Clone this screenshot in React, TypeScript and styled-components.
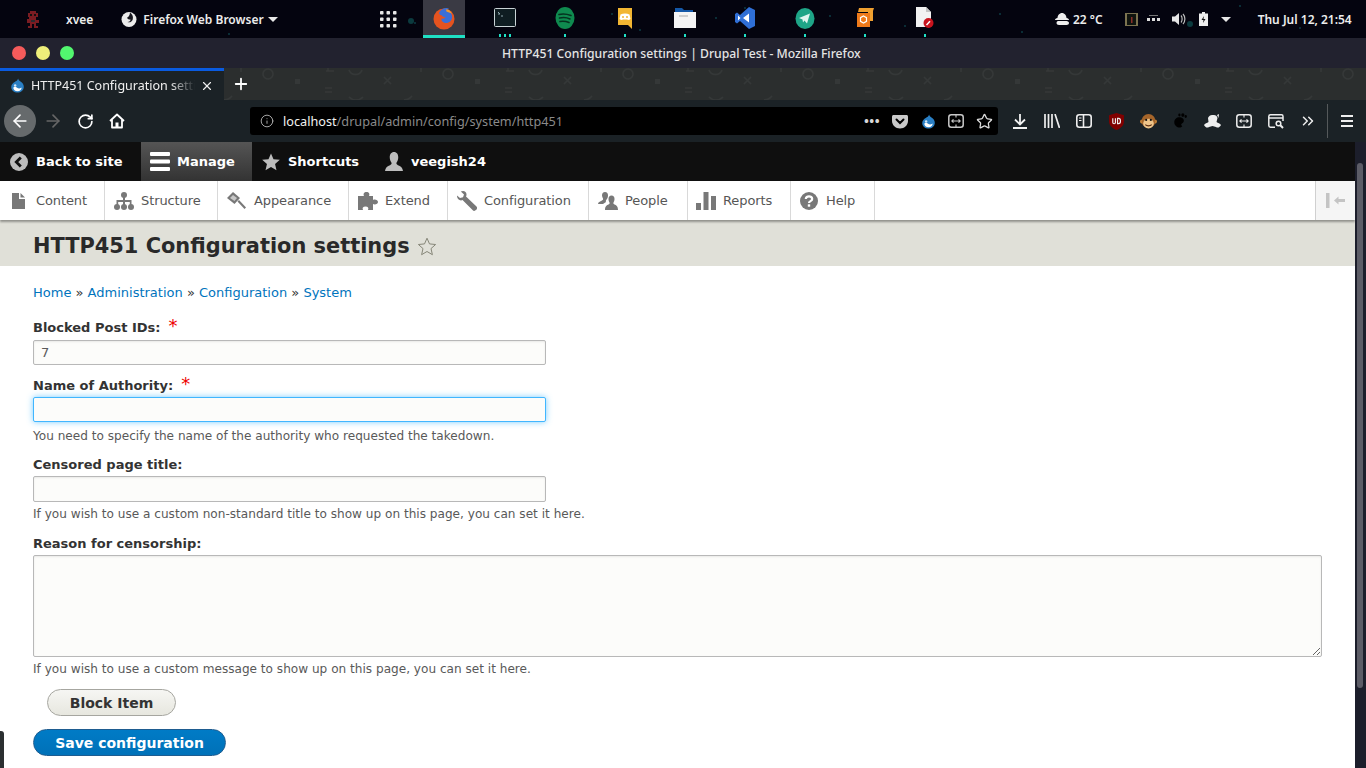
import React from "react";
import styled, { createGlobalStyle } from "styled-components";
import { ArrowLeft, ArrowRight, RotateCw, Info, Star, ChevronsRight, Plus, X } from "lucide-react";

const GlobalStyle = createGlobalStyle`
  html, body {
    margin: 0;
    padding: 0;
    height: 768px;
    overflow: hidden;
    background: #04040f;
  }
  * { box-sizing: border-box; }
`;

const Drupal = ({ size = 16 }: { size?: number }) => (
  <svg width={size} height={size} viewBox="0 0 16 16">
    <path d="M8.6 0.5C9 2.6 11 3.4 12.3 4.6 14 6.100 14.800 8 14.700 9.800 14.500 13.100 11.700 15.500 8 15.500 4.300 15.500 1.300 13 1.300 9.500 1.300 6.800 3.300 5.200 5 4.200 6.500 3.300 8.200 2.600 8.600 0.500Z" fill="#2a7fc4" />
    <path d="M3.500 10.300C4.500 8.900 6.200 9.300 7.600 10.300 9 11.300 10.400 11.500 12.300 10 12.600 12 10.800 14 8 14 5.400 14 3.600 12.400 3.500 10.300Z" fill="#fff" />
    <circle cx="5.500" cy="8" r="1.300" fill="#cfe6f7" />
  </svg>
);

const Firefox = ({ size = 24 }: { size?: number }) => (
  <svg width={size} height={size} viewBox="0 0 24 24">
    <circle cx="12" cy="13" r="10.500" fill="#e5531f" />
    <path d="M7 7C9 2.500 14 1 17 2.500 15.500 3 15 4 15.500 4.500 18 5 20.500 8 20 12 19.500 15.500 16 17.500 13 17 10.500 16.500 9 14.500 9.500 12.500 11 13 13 12.500 13.500 11.500 12 11 10 10.500 10 9.500 8.500 9.500 7.500 8.500 7 7Z" fill="#3a6fd8" />
    <path d="M14 3.500C16.500 3 19 5 20 8 18 6.500 16 6 14.500 5.500Z" fill="#f29a2e" />
  </svg>
);

const FirefoxMono = () => (
  <svg width="16" height="16" viewBox="0 0 16 16">
    <circle cx="8" cy="8.500" r="7.500" fill="#ececec" />
    <path d="M9 1.500C11 3 12.500 5 11.800 8.200 11.200 10.800 8.500 12 6.500 11 8.500 10.800 9.500 9.800 9.500 8.500 8 8.800 6.500 8 6 6.800 7.500 6 8.800 4.500 9 1.500Z" fill="#17171f" />
  </svg>
);

const Deadpool = () => (
  <svg width="14" height="17" viewBox="0 0 14 17">
    <path d="M4 0H10V2H12V6H10V9H13V12H10V15H12V17H8V13H6V17H2V15H4V12H1V8H3V6H2V2H4Z" fill="#7a1c22" />
    <rect x="4" y="3" width="2" height="2" fill="#111" />
    <rect x="8" y="3" width="2" height="2" fill="#111" />
    <rect x="5" y="9" width="4" height="2" fill="#2b2b30" />
  </svg>
);

const Grid = () => (
  <svg width="17" height="17" viewBox="0 0 17 17" fill="#e8e8e8">
    {[0, 6.500, 13].flatMap((y) =>
      [0, 6.500, 13].map((x) => <rect key={`${x}-${y}`} x={x} y={y} width="3.500" height="3.500" rx="0.800" />)
    )}
  </svg>
);

const TermIcon = () => (
  <svg width="22" height="20" viewBox="0 0 22 20">
    <rect x="0.500" y="0.500" width="21" height="18" rx="1" fill="#0f1d22" stroke="#c9d3d6" />
    <path d="M4 4L6 6 4 6M7 8H9" stroke="#8fa6ad" strokeWidth="1" fill="none" />
  </svg>
);

const Spotify = () => (
  <svg width="20" height="24" viewBox="0 0 20 24">
    <ellipse cx="10" cy="12" rx="9.500" ry="11" fill="#0f8a4f" />
    <path d="M4 8.500C8 7.500 12 8 16 9.500M4.500 12C8 11.200 12 11.500 15 13M5 15.500C8 15 11 15.200 14 16.500" stroke="#05321f" strokeWidth="1.600" fill="none" strokeLinecap="round" />
  </svg>
);

const Discord = () => (
  <svg width="16" height="21" viewBox="0 0 16 21">
    <path d="M1 0H15V21L11 17H1Z" fill="#f2b632" />
    <path d="M3.500 6.500C6 5 10 5 12.500 6.500L13.500 11C12 12.500 10.500 12 10 11.500H6C5.500 12 4 12.500 2.500 11Z" fill="#fff" />
    <circle cx="6" cy="9" r="1" fill="#f2b632" />
    <circle cx="10" cy="9" r="1" fill="#f2b632" />
  </svg>
);

const Files = () => (
  <svg width="22" height="22" viewBox="0 0 22 22">
    <path d="M1 1H8L10 3H19V8H1Z" fill="#1458a8" />
    <path d="M0 5H22V21H0Z" fill="#f4f4f4" />
    <rect x="5" y="8" width="9" height="2" fill="#cfcfcf" />
  </svg>
);

const VsCode = () => (
  <svg width="20" height="22" viewBox="0 0 20 22">
    <path d="M14 0L20 3V19L14 22 5 14 2 16.500 0 15V7L2 5.500 5 8Z" fill="#2f6fd6" />
    <path d="M14 6.500V15.500L8 11ZM3 8.500L5.500 11 3 13.500Z" fill="#fff" />
  </svg>
);

const Telegram = () => (
  <svg width="20" height="21" viewBox="0 0 20 21">
    <ellipse cx="10" cy="10.500" rx="9.500" ry="10.500" fill="#1ea587" />
    <path d="M4 10L15 5.500 12 15.500 9.500 12.500 8 14.500 7.500 11.500Z" fill="#dff5ef" />
  </svg>
);

const Sublime = () => (
  <svg width="20" height="20" viewBox="0 0 20 20">
    <path d="M4 0H19L18 3V13H13V4H3Z" fill="#f0a030" />
    <rect x="2" y="5" width="13" height="14" fill="#ef7a1a" />
    <path d="M8.500 8L11.500 9.700V13.300L8.500 15 5.500 13.300V9.700Z" fill="none" stroke="#fff" strokeWidth="1.200" />
  </svg>
);

const DocIcon = () => (
  <svg width="18" height="22" viewBox="0 0 18 22">
    <path d="M0 0H10L15 5V20H0Z" fill="#f2f2f2" />
    <path d="M10 0L15 5H10Z" fill="#c4c4c4" />
    <circle cx="12.500" cy="16" r="5" fill="#c8141e" />
    <path d="M10.500 18L14 14.200" stroke="#fff" strokeWidth="1.500" />
  </svg>
);

const GnomeFoot = () => (
  <svg width="16" height="16" viewBox="0 0 14 14" fill="#000">
    <path d="M2 8C2 5 5 3 8 4 11 5 11 8 9 9 7.500 9.700 8 11 9 11.500 7 14 2 12 2 8Z" />
    <ellipse cx="9.500" cy="1.800" rx="1.400" ry="1.600" />
    <ellipse cx="6.500" cy="1.800" rx="1" ry="1.300" />
    <ellipse cx="12" cy="3" rx="1" ry="1.300" />
  </svg>
);

const Cloud = () => (
  <svg width="14" height="14" viewBox="0 0 14 14" fill="#eee">
    <path d="M2.500 6C2.500 3.500 4.500 1 7 1S11.500 3.500 11.500 6C13 6 14 7 14 8H0C0 7 1 6 2.500 6Z" />
    <path d="M3 9H11.500C13 9 14 10 14 11S13 13 11.500 13H4C2.500 13 1.500 12 1.500 11S2 9 3 9Z" />
  </svg>
);

const Volume = () => (
  <svg width="14" height="14" viewBox="0 0 14 14" fill="#e6e6e6">
    <path d="M0 4.500H3L7 1V13L3 9.500H0Z" />
    <path d="M9 3.500C10.500 5 10.500 9 9 10.500M11 2C13.500 4.500 13.500 9.500 11 12" stroke="#bbb" strokeWidth="1.200" fill="none" />
  </svg>
);

const Battery = () => (
  <svg width="9" height="14" viewBox="0 0 9 14">
    <path d="M3 0H6V1.500H9V14H0V1.500H3Z" fill="#eee" />
    <path d="M5 4L2.500 8H4.500L4 11 6.500 7H4.500Z" fill="#111" />
  </svg>
);

const Pocket = () => (
  <svg width="16" height="15" viewBox="0 0 16 15">
    <path d="M1.500 1H14.500C15.300 1 16 1.700 16 2.500V7C16 11 12.500 14.500 8 14.500S0 11 0 7V2.500C0 1.700 0.700 1 1.500 1Z" fill="#c9c9c9" />
    <path d="M4.500 5.500L8 9 11.500 5.500" stroke="#000" strokeWidth="2" fill="none" strokeLinecap="round" />
  </svg>
);

const FrameArrows = ({ color = "#eee" }: { color?: string }) => (
  <svg width="16" height="14" viewBox="0 0 16 14" fill="none" stroke={color} strokeWidth="1.500">
    <rect x="0.800" y="0.800" width="14.400" height="12.400" rx="2.500" />
    <path d="M8 1V3.500M8 10.500V13M4 7H12M5.500 5.300L3.800 7 5.500 8.700M10.500 5.300L12.200 7 10.500 8.700" strokeWidth="1.100" />
  </svg>
);

const HomeIcon = () => (
  <svg width="16" height="16" viewBox="0 0 16 16" fill="none" stroke="#fff" strokeWidth="1.800">
    <path d="M1 8L8 1.500 15 8M3 6.500V14.500H13V6.500" strokeLinejoin="round" />
    <rect x="6.500" y="9.500" width="3" height="5" fill="#fff" stroke="none" />
  </svg>
);

const DownloadIcon = () => (
  <svg width="14" height="15" viewBox="0 0 14 15" fill="none" stroke="#f2f2f2" strokeWidth="1.800">
    <path d="M7 0V10M2 5.500L7 10.500 12 5.500" />
    <path d="M0 14H14" strokeWidth="2" />
  </svg>
);

const LibraryIcon = () => (
  <svg width="16" height="14" viewBox="0 0 16 14" stroke="#eee" strokeWidth="1.700" fill="none">
    <path d="M1 0V14M4.500 0V14M8 0V14M11 0L15.500 14" />
  </svg>
);

const SidebarIcon = () => (
  <svg width="16" height="14" viewBox="0 0 16 14" fill="none" stroke="#eee" strokeWidth="1.600">
    <rect x="0.800" y="0.800" width="14.400" height="12.400" rx="2.500" />
    <path d="M7.500 1V13" />
    <path d="M3 4H5.500M3 6.500H5.500" strokeWidth="1.100" />
  </svg>
);

const UBlock = () => (
  <svg width="15" height="17" viewBox="0 0 14 16">
    <path d="M7 0L14 2V8C14 12 10.500 14.700 7 16 3.500 14.700 0 12 0 8V2Z" fill="#800000" />
    <path d="M3.500 5V9C3.500 10.500 6 10.500 6 9V5M8 5V10H9C11.300 10 11.300 5 9 5Z" stroke="#eee" strokeWidth="1.100" fill="none" />
  </svg>
);

const Monkey = () => (
  <svg width="17" height="17" viewBox="0 0 16 16">
    <circle cx="2" cy="8" r="2" fill="#c78436" />
    <circle cx="14" cy="8" r="2" fill="#c78436" />
    <circle cx="8" cy="7.500" r="6.500" fill="#a5652a" />
    <ellipse cx="8" cy="10" rx="5" ry="4.500" fill="#efc58a" />
    <circle cx="5.800" cy="6.500" r="1" fill="#111" />
    <circle cx="10.200" cy="6.500" r="1" fill="#111" />
    <path d="M5 11C6.500 12.500 9.500 12.500 11 11" stroke="#5a2c10" fill="none" />
  </svg>
);

const Hat = () => (
  <svg width="17" height="15" viewBox="0 0 17 15" fill="#eee">
    <path d="M4 4C5 1.500 7 0.500 9 1 11 0.500 13 1.500 13.500 4L12.500 8C14 9 16 9.500 17 11 16 13 14 14.500 12 13L8.500 12 5 13C3 14.500 1 13 0 11 1 9.500 3 9 4.500 8Z" />
    <path d="M13 1L15 0 14.500 4Z" />
  </svg>
);

const FrameSearch = () => (
  <svg width="16" height="15" viewBox="0 0 16 15" fill="none" stroke="#eee" strokeWidth="1.500">
    <path d="M15 7V2.500C15 1.500 14.300 0.800 13.500 0.800H2.500C1.500 0.800 0.800 1.500 0.800 2.500V11.500C0.800 12.500 1.500 13.200 2.500 13.200H7" />
    <path d="M1 4H15" />
    <circle cx="10.500" cy="9.500" r="2.300" />
    <path d="M12.300 11.300L15 14" strokeWidth="2" />
  </svg>
);

const BurgerIcon = () => (
  <svg width="12" height="12" viewBox="0 0 12 12" fill="#eee">
    <rect y="0" width="12" height="2" />
    <rect y="5" width="12" height="2" />
    <rect y="10" width="12" height="2" />
  </svg>
);

const BackCircle = () => (
  <svg width="18" height="18" viewBox="0 0 18 18">
    <circle cx="9" cy="9" r="9" fill="#bdbdbd" />
    <path d="M10.800 4.500L6.300 9 10.800 13.500" stroke="#111" strokeWidth="2.800" fill="none" />
  </svg>
);

const ManageIcon = () => (
  <svg width="20" height="19" viewBox="0 0 20 19" fill="#fff">
    <rect width="20" height="4" rx="1" />
    <rect y="7.500" width="20" height="4" rx="1" />
    <rect y="15" width="20" height="4" rx="1" />
  </svg>
);

const ShortcutStar = () => (
  <svg width="18" height="18" viewBox="0 0 20 19">
    <path d="M10 0L12.800 6.400 19.800 7.100 14.500 11.700 16.100 18.600 10 15 3.900 18.600 5.500 11.700 0.200 7.100 7.200 6.400Z" fill="#bdbdbd" />
  </svg>
);

const UserIcon = () => (
  <svg width="18" height="19" viewBox="0 0 19 20">
    <path d="M9.500 0C12.500 0 14 2.500 14 5.500 14 8 13 10 12 11.500 12 13 13 13.500 15 14.500 17 15.500 18.500 16.500 19 20H0C0.500 16.500 2 15.500 4 14.500 6 13.500 7 13 7 11.500 6 10 5 8 5 5.500 5 2.500 6.500 0 9.500 0Z" fill="#bdbdbd" />
  </svg>
);

const trayColor = "#787878";

const ContentIcon = () => (
  <svg width="13" height="16" viewBox="0 0 13 16" fill={trayColor}>
    <path d="M0 0H7V6H13V16H0Z" />
    <path d="M8.500 0L13 4.500H8.500Z" />
  </svg>
);

const StructureIcon = () => (
  <svg width="20" height="18" viewBox="0 0 20 18" fill={trayColor}>
    <circle cx="10" cy="3" r="3" />
    <circle cx="3" cy="15" r="3" />
    <circle cx="10" cy="15" r="3" />
    <circle cx="17" cy="15" r="3" />
    <path d="M9 5H11V8H17.500V13H15.800V10H11V13H9V10H4.200V13H2.500V8H9Z" />
  </svg>
);

const AppearanceIcon = () => (
  <svg width="19" height="17" viewBox="0 0 19 17" fill={trayColor}>
    <path d="M0 6L6 0 13 6 7.500 12Z" />
    <path d="M10.500 9.500L12 8 19 15.500 17.500 17Z" />
    <path d="M3 6L6 3 10 6 7.500 9Z" fill="#c8c8c8" />
  </svg>
);

const ExtendIcon = () => (
  <svg width="20" height="18" viewBox="0 0 20 18" fill={trayColor}>
    <path d="M0 4H6C5 2 6 0 8.500 0S12 2 11 4H15V8C17 7 20 8 20 10S17 13 15 12V18H10C11 16 10 14.500 7.500 14.500S4 16 5 18H0Z" />
  </svg>
);

const ConfigIcon = () => (
  <svg width="20" height="20" viewBox="0 0 20 20" fill={trayColor}>
    <path d="M6 0C8 0 9.500 1.500 9.500 3.500 9.500 4.500 9.300 5 9 5.500L19.500 15.500C20.300 16.300 20.300 17.500 19.300 18.800 18 20 16.700 20.300 15.800 19.300L5.500 9C4.500 9.500 3.500 9.500 2.500 9 0.800 8.300 0 6.500 0 4.500L3 7 6 6.200 7 3.500 3.800 0.500C4.500 0.200 5.200 0 6 0Z" />
  </svg>
);

const PeopleIcon = () => (
  <svg width="20" height="18" viewBox="0 0 20 18" fill={trayColor}>
    <path d="M7 0C9 0 10 1.500 10 3.500 10 5 9.500 6 9 7 8 8 7.500 9 8 10L5 12H0C0 10 2 9.500 4 8.500 5 8 5.300 7.500 5 6.500 4.500 5.500 4 4.500 4 3.500 4 1.500 5 0 7 0Z" />
    <path d="M13.500 3.500C15.500 3.500 16.500 5 16.500 7 16.500 8.500 16 9.500 15.500 10.500 15.200 11.500 15.500 12 16.500 12.500 18 13.200 20 14 20 18H7C7 14 9 13.200 10.500 12.500 11.500 12 11.800 11.500 11.500 10.500 11 9.500 10.500 8.500 10.500 7 10.500 5 11.500 3.500 13.500 3.500Z" />
  </svg>
);

const ReportsIcon = () => (
  <svg width="20" height="18" viewBox="0 0 20 18" fill={trayColor}>
    <rect x="0" y="11" width="5" height="7" />
    <rect x="7.500" y="0" width="5" height="18" />
    <rect x="15" y="4" width="5" height="14" />
  </svg>
);

const HelpIcon = () => (
  <svg width="18" height="18" viewBox="0 0 18 18">
    <circle cx="9" cy="9" r="9" fill={trayColor} />
    <path d="M5.800 7C5.800 3.400 12.200 3.400 12.200 7 12.200 9.300 9 9 9 11" stroke="#fff" strokeWidth="2.200" fill="none" />
    <rect x="7.800" y="12.300" width="2.400" height="2.400" fill="#fff" />
  </svg>
);

const CollapseIcon = () => (
  <svg width="20" height="15" viewBox="0 0 20 15" fill="#c4c4c4">
    <rect x="0" y="0" width="3.500" height="15" />
    <path d="M8 7.500L12.500 3.500V6H19V9H12.500V11.500Z" />
  </svg>
);

const OutlineStar = () => (
  <svg width="20" height="19" viewBox="0 0 20 19">
    <path d="M10 1.200L12.500 6.900 18.600 7.500 14 11.600 15.400 17.700 10 14.500 4.600 17.700 6 11.600 1.400 7.500 7.500 6.900Z" fill="none" stroke="#868678" />
  </svg>
);

// the wallpaper marks behind the tab strip repeat every 180px
const TabMarks = () => (
  <MarksSvg width="1142" height="32" viewBox="0 0 1142 32">
    <defs>
      <pattern id="marks" x="0" y="0" width="180" height="32" patternUnits="userSpaceOnUse">
        <g stroke="#353838" strokeWidth="1.500" fill="none">
          <circle cx="44" cy="6" r="5" />
          <path d="M125 2C127 8 136 8 138 2M104 0V3H109M102 3H110" />
          <path d="M-6 28C-2 33 4 33 8 28M125 29C129 33 135 33 139 29" />
          <path d="M160 9L167 16M167 9L160 16" />
          <path d="M17 0V4" />
          <path d="M101 20H108M101 24H108" />
        </g>
        <rect x="71" y="11" width="5" height="5" fill="#353838" />
      </pattern>
    </defs>
    <rect width="1142" height="32" fill="url(#marks)" />
  </MarksSvg>
);

const stars = [
  [458, 22], [505, 12], [612, 14], [640, 30], [716, 18], [745, 8], [830, 16], [905, 26],
  [1000, 14], [1022, 32], [1190, 24], [1240, 6], [1300, 28], [229, 34], [415, 23],
];

const StarField = () => (
  <StarSvg width="1366" height="38" viewBox="0 0 1366 38">
    {stars.map(([x, y]) => (
      <circle key={`${x}-${y}`} cx={x} cy={y} r="1" fill="#0d3b44" />
    ))}
    <circle cx="411" cy="21" r="3" fill="#0b3a3e" />
    <circle cx="1190" cy="24" r="3" fill="#0b3a3e" />
  </StarSvg>
);

const Desktop = styled.div`
  width: 1366px;
  height: 768px;
  display: flex;
  flex-direction: column;
  position: relative;
  overflow: hidden;
  font-family: "DejaVu Sans", Verdana, sans-serif;
`;

const TopBar = styled.div`
  height: 38px;
  flex: none;
  display: flex;
  align-items: center;
  position: relative;
  background: #04040f;
  color: #ececec;
  font: 600 12px "Noto Sans", sans-serif;
`;

const StarSvg = styled.svg`
  position: absolute;
  left: 0;
  top: 0;
`;

const TopGroup = styled.div<{ $width: number }>`
  width: ${(p) => p.$width}px;
  height: 100%;
  flex: none;
  display: flex;
  align-items: center;
  position: relative;
`;

const TopText = styled.span<{ $left?: number }>`
  margin-left: ${(p) => p.$left ?? 0}px;
  white-space: nowrap;
`;

const Caret = styled.span<{ $left: number }>`
  margin-left: ${(p) => p.$left}px;
  width: 0;
  height: 0;
  border-left: 5px solid transparent;
  border-right: 5px solid transparent;
  border-top: 5px solid #e8e8e8;
`;

const IconSlot = styled.span<{ $left: number }>`
  margin-left: ${(p) => p.$left}px;
  display: inline-flex;
  align-items: center;
  justify-content: center;
`;

const ActiveApp = styled.div`
  width: 42px;
  height: 38px;
  flex: none;
  display: flex;
  align-items: center;
  justify-content: center;
  position: relative;
  background: #3a3a44;
  border-bottom: 3px solid #1fe0c4;
  padding-top: 1px;
`;

const DockSlot = styled.div`
  width: 60px;
  height: 38px;
  flex: none;
  display: flex;
  align-items: center;
  justify-content: center;
  position: relative;
  padding-bottom: 2px;
`;

const Dots = styled.span`
  position: absolute;
  bottom: 1px;
  left: 0;
  right: 0;
  display: flex;
  justify-content: center;
  gap: 3px;
`;

const Dot = styled.i`
  width: 2px;
  height: 3px;
  background: #1fe0c4;
`;

const Clock = styled.span`
  margin-left: 27px;
  white-space: nowrap;
`;

const TitleBar = styled.div`
  height: 30px;
  flex: none;
  display: flex;
  align-items: center;
  position: relative;
  background: #22222f;
  color: #e4e4e4;
  font: 500 12.200px "Noto Sans", sans-serif;
`;

const Lights = styled.div`
  display: flex;
  gap: 10px;
  margin-left: 12px;
`;

const Light = styled.span<{ $color: string }>`
  width: 14px;
  height: 14px;
  border-radius: 50%;
  background: ${(p) => p.$color};
`;

const WindowTitle = styled.div`
  margin-left: 428px;
  white-space: nowrap;
`;

const TabStrip = styled.div`
  height: 32px;
  flex: none;
  display: flex;
  align-items: stretch;
  background: #2b2e2e;
`;

const MarksSvg = styled.svg`
  position: absolute;
  left: 0;
  top: 0;
`;

const ActiveTab = styled.div`
  width: 224px;
  flex: none;
  display: flex;
  align-items: center;
  background: #1b2226;
  border-top: 3px solid #0a5be0;
  color: #f0f0f0;
  padding: 0 0 0 10px;
  font: 400 12.500px "Noto Sans", sans-serif;
`;

const TabTitle = styled.div`
  width: 164px;
  margin-left: 6px;
  overflow: hidden;
  white-space: nowrap;
  mask-image: linear-gradient(to right, #000 85%, transparent);
`;

const TabClose = styled.span`
  margin-left: 5px;
  display: inline-flex;
`;

const StripRest = styled.div`
  flex: 1;
  display: flex;
  align-items: center;
  position: relative;
  overflow: hidden;
`;

const NewTab = styled.span`
  margin-left: 8px;
  display: inline-flex;
  position: relative;
`;

const NavBar = styled.div`
  height: 42px;
  flex: none;
  display: flex;
  align-items: center;
  background: #1b2226;
`;

const BackButton = styled.span`
  width: 32px;
  height: 32px;
  margin-left: 4px;
  border-radius: 50%;
  background: #666a6c;
  display: inline-flex;
  align-items: center;
  justify-content: center;
`;

const NavSlot = styled.span<{ $width?: number }>`
  width: ${(p) => p.$width ?? 32}px;
  flex: none;
  display: inline-flex;
  align-items: center;
  justify-content: center;
`;

const UrlBar = styled.div`
  width: 748px;
  height: 28px;
  margin: 0 6px 0 117px;
  flex: none;
  display: flex;
  align-items: center;
  background: #000;
  border-radius: 3px;
  font: 400 12.700px "Noto Sans", sans-serif;
  color: #8a8a8a;
`;

const UrlText = styled.div`
  flex: 1;
  white-space: nowrap;
`;

const UrlHost = styled.span`
  color: #f2f2f2;
`;

const UrlSlot = styled.span<{ $width?: number }>`
  width: ${(p) => p.$width ?? 28}px;
  flex: none;
  display: inline-flex;
  align-items: center;
  justify-content: center;
`;

const Meatball = styled.span`
  color: #d8d8d8;
  font-weight: 700;
  font-size: 13px;
  letter-spacing: 0.5px;
`;

const NavSeparator = styled.span`
  width: 1px;
  height: 34px;
  margin: 0 13px 0 3px;
  background: #55595b;
`;

const Viewport = styled.div`
  flex: 1;
  min-height: 0;
  display: flex;
  background: #1c1e2b;
`;

const Page = styled.div`
  width: 1355px;
  flex: none;
  background: #fff;
  overflow: hidden;
`;

const ScrollTrack = styled.div`
  flex: 1;
  padding: 21px 3px 0 2px;
`;

const ScrollThumb = styled.div`
  height: 525px;
  border-radius: 3px;
  background: #5c5c66;
`;

const Toolbar = styled.div`
  height: 39px;
  display: flex;
  align-items: stretch;
  background: #0f0f0f;
  color: #fff;
  font-size: 13px;
  font-weight: 700;
`;

const BarItem = styled.div<{ $width: number; $active?: boolean }>`
  width: ${(p) => p.$width}px;
  flex: none;
  display: flex;
  align-items: center;
  gap: ${(p) => (p.$active ? 7 : 8)}px;
  padding-left: ${(p) => (p.$active ? 9 : 10)}px;
  white-space: nowrap;
  background: ${(p) => (p.$active ? "linear-gradient(#555, #333)" : "transparent")};
`;

const Tray = styled.div`
  height: 39px;
  display: flex;
  align-items: stretch;
  position: relative;
  background: #fff;
  box-shadow: 0 2px 2px rgba(0, 0, 0, 0.35);
`;

const TrayItem = styled.div<{ $width: number }>`
  width: ${(p) => p.$width}px;
  flex: none;
  display: flex;
  align-items: center;
  border-right: 1px solid #d9d9d9;
  color: #565656;
  font-size: 13px;
  letter-spacing: -0.1px;
  white-space: nowrap;
`;

const TrayIcon = styled.span<{ $pad: number; $width?: number }>`
  width: ${(p) => p.$width ?? 36}px;
  padding-left: ${(p) => p.$pad}px;
  flex: none;
  display: inline-flex;
  align-items: center;
`;

const TrayToggle = styled.div`
  width: 40px;
  margin-left: auto;
  display: flex;
  align-items: center;
  justify-content: center;
  background: #f5f5f5;
  border-left: 1px solid #d0d0d0;
`;

const TitleBand = styled.div`
  height: 46px;
  display: flex;
  align-items: center;
  gap: 7px;
  padding: 7px 0 0 33px;
  background: #e0e0d8;
`;

const PageTitle = styled.h1`
  margin: 0;
  color: #292929;
  font-size: 20.900px;
  font-weight: 700;
  line-height: 1;
  white-space: nowrap;
`;

const Content = styled.div`
  padding: 18px 33px 0;
`;

const Breadcrumb = styled.div`
  height: 18px;
  line-height: 18px;
  font-size: 13px;
  color: #333;
  margin-bottom: 17px;
`;

const CrumbLink = styled.a`
  color: #0074bd;
`;

const Field = styled.div<{ $gap: number }>`
  margin-bottom: ${(p) => p.$gap}px;
`;

const Label = styled.div<{ $after?: number }>`
  height: 18px;
  line-height: 18px;
  margin-bottom: ${(p) => p.$after ?? 2}px;
  color: #333;
  font-size: 13px;
  font-weight: 700;
`;

const Required = styled.span`
  margin-left: 8px;
  color: #e00;
  font-size: 18px;
  font-weight: 400;
  line-height: 0;
`;

const TextInput = styled.input<{ $focused?: boolean; $height?: number }>`
  display: block;
  width: 513px;
  height: ${(p) => p.$height ?? 25}px;
  padding: 0 7px;
  outline: none;
  border-radius: 2px;
  background: #fcfcfa;
  color: #595959;
  font: 13px "DejaVu Sans", sans-serif;
  border: 1px solid ${(p) => (p.$focused ? "#40b6ff" : "#b8b8b8")};
  box-shadow: ${(p) =>
    p.$focused ? "0 0 6px rgba(64, 182, 255, 0.7)" : "inset 0 1px 2px rgba(0, 0, 0, 0.08)"};
`;

const TextArea = styled.textarea`
  display: block;
  width: 1289px;
  height: 102px;
  padding: 7px;
  outline: none;
  border: 1px solid #b8b8b8;
  border-radius: 2px;
  background: #fcfcfa;
  box-shadow: inset 0 1px 2px rgba(0, 0, 0, 0.08);
`;

const Description = styled.div<{ $top?: number }>`
  height: 18px;
  line-height: 18px;
  margin-top: ${(p) => p.$top ?? 3}px;
  color: #595959;
  font-size: 12.100px;
`;

const BlockButton = styled.button`
  display: block;
  width: 129px;
  height: 27px;
  margin: 0 0 13px 14px;
  padding: 0;
  border: 1px solid #a6a6a0;
  border-radius: 14px;
  background: linear-gradient(#f6f6f3, #e7e7df);
  color: #333;
  font: 700 14px "DejaVu Sans", sans-serif;
`;

const SaveButton = styled.button`
  display: block;
  width: 193px;
  height: 27px;
  padding: 0;
  border: 1px solid #1e5c90;
  border-radius: 14px;
  background: linear-gradient(#007bc6, #0071b8);
  color: #fff;
  font: 700 14px "DejaVu Sans", sans-serif;
`;

const CornerTab = styled.div`
  position: absolute;
  left: 0;
  bottom: 0;
  width: 4px;
  height: 37px;
  background: #2b2f31;
  border-radius: 0 3px 0 0;
`;

const dock = [
  { icon: <TermIcon />, dots: 3 },
  { icon: <Spotify />, dots: 1 },
  { icon: <Discord />, dots: 1 },
  { icon: <Files />, dots: 1 },
  { icon: <VsCode />, dots: 1 },
  { icon: <Telegram />, dots: 1 },
  { icon: <Sublime />, dots: 1 },
  { icon: <DocIcon />, dots: 1 },
];

const trayItems = [
  { label: "Content", width: 105, pad: 12, icon: <ContentIcon /> },
  { label: "Structure", width: 113, pad: 9, icon: <StructureIcon /> },
  { label: "Appearance", width: 131, pad: 9, icon: <AppearanceIcon /> },
  { label: "Extend", width: 99, pad: 9, icon: <ExtendIcon /> },
  { label: "Configuration", width: 141, pad: 9, icon: <ConfigIcon /> },
  { label: "People", width: 99, pad: 9, icon: <PeopleIcon /> },
  { label: "Reports", width: 103, pad: 8, iconWidth: 35, icon: <ReportsIcon /> },
  { label: "Help", width: 84, pad: 9, iconWidth: 35, icon: <HelpIcon /> },
];

const App = () => {
  return (
    <Desktop>
      <GlobalStyle />
      <TopBar>
        <StarField />
        <TopGroup $width={380}>
          <IconSlot $left={26}>
            <Deadpool />
          </IconSlot>
          <TopText $left={26}>xvee</TopText>
          <IconSlot $left={28}>
            <FirefoxMono />
          </IconSlot>
          <TopText $left={6}>Firefox Web Browser</TopText>
          <Caret $left={4} />
        </TopGroup>
        <TopGroup $width={43}>
          <Grid />
        </TopGroup>
        <ActiveApp>
          <Firefox />
        </ActiveApp>
        <TopGroup $width={10} />
        {dock.map((d, i) => (
          <DockSlot key={i}>
            {d.icon}
            <Dots>
              {Array.from({ length: d.dots }).map((_, n) => (
                <Dot key={n} />
              ))}
            </Dots>
          </DockSlot>
        ))}
        <TopGroup $width={411}>
          <IconSlot $left={100}>
            <Cloud />
          </IconSlot>
          <TopText $left={4}>22 °C</TopText>
          <IconSlot $left={22}>
            <svg width="13" height="13" viewBox="0 0 13 13">
              <rect width="13" height="13" fill="#7c7350" />
              <rect x="2" y="1" width="9" height="11" fill="#10140f" />
              <rect x="6" y="4" width="1.500" height="6" fill="#8a2e28" />
            </svg>
          </IconSlot>
          <IconSlot $left={9}>
            <svg width="13" height="8" viewBox="0 0 13 8" fill="#ddd">
              <rect x="0" y="3" width="3" height="3" />
              <rect x="5" y="3" width="3" height="3" />
              <rect x="10" y="3" width="3" height="3" />
              <rect x="2" y="0" width="9" height="1" fill="#777" />
            </svg>
          </IconSlot>
          <IconSlot $left={12}>
            <Volume />
          </IconSlot>
          <IconSlot $left={13}>
            <Battery />
          </IconSlot>
          <Caret $left={13} />
          <Clock>Thu Jul 12, 21:54</Clock>
        </TopGroup>
      </TopBar>

      <TitleBar>
        <Lights>
          <Light $color="#f55b5b" />
          <Light $color="#efef7a" />
          <Light $color="#52f76f" />
        </Lights>
        <WindowTitle>HTTP451 Configuration settings | Drupal Test - Mozilla Firefox</WindowTitle>
      </TitleBar>

      <TabStrip>
        <ActiveTab>
          <Drupal size={15} />
          <TabTitle>HTTP451 Configuration settings</TabTitle>
          <TabClose>
            <X size={14} color="#eee" strokeWidth={2} />
          </TabClose>
        </ActiveTab>
        <StripRest>
          <TabMarks />
          <NewTab>
            <Plus size={18} color="#fff" strokeWidth={2.400} />
          </NewTab>
        </StripRest>
      </TabStrip>

      <NavBar>
        <BackButton>
          <ArrowLeft size={20} color="#fff" strokeWidth={2} />
        </BackButton>
        <NavSlot $width={33}>
          <ArrowRight size={20} color="#666" strokeWidth={2} />
        </NavSlot>
        <NavSlot>
          <RotateCw size={17} color="#fff" strokeWidth={2.400} />
        </NavSlot>
        <NavSlot>
          <HomeIcon />
        </NavSlot>
        <UrlBar>
          <UrlSlot $width={33}>
            <Info size={14} color="#bbb" strokeWidth={1.500} />
          </UrlSlot>
          <UrlText>
            <UrlHost>localhost</UrlHost>/drupal/admin/config/system/http451
          </UrlText>
          <UrlSlot>
            <Meatball>•••</Meatball>
          </UrlSlot>
          <UrlSlot>
            <Pocket />
          </UrlSlot>
          <UrlSlot>
            <Drupal size={15} />
          </UrlSlot>
          <UrlSlot>
            <FrameArrows color="#c9c9c9" />
          </UrlSlot>
          <UrlSlot>
            <Star size={17} color="#ddd" strokeWidth={1.800} />
          </UrlSlot>
        </UrlBar>
        <NavSlot>
          <DownloadIcon />
        </NavSlot>
        <NavSlot>
          <LibraryIcon />
        </NavSlot>
        <NavSlot>
          <SidebarIcon />
        </NavSlot>
        <NavSlot>
          <UBlock />
        </NavSlot>
        <NavSlot>
          <Monkey />
        </NavSlot>
        <NavSlot>
          <GnomeFoot />
        </NavSlot>
        <NavSlot>
          <Hat />
        </NavSlot>
        <NavSlot>
          <FrameArrows />
        </NavSlot>
        <NavSlot>
          <FrameSearch />
        </NavSlot>
        <NavSlot>
          <ChevronsRight size={18} color="#eee" strokeWidth={2} />
        </NavSlot>
        <NavSeparator />
        <BurgerIcon />
      </NavBar>

      <Viewport>
        <Page>
          <Toolbar>
            <BarItem $width={141}>
              <BackCircle />
              Back to site
            </BarItem>
            <BarItem $width={111} $active>
              <ManageIcon />
              Manage
            </BarItem>
            <BarItem $width={123}>
              <ShortcutStar />
              Shortcuts
            </BarItem>
            <BarItem $width={120}>
              <UserIcon />
              veegish24
            </BarItem>
          </Toolbar>
          <Tray>
            {trayItems.map((t) => (
              <TrayItem key={t.label} $width={t.width}>
                <TrayIcon $pad={t.pad} $width={t.iconWidth}>
                  {t.icon}
                </TrayIcon>
                {t.label}
              </TrayItem>
            ))}
            <TrayToggle>
              <CollapseIcon />
            </TrayToggle>
          </Tray>
          <TitleBand>
            <PageTitle>HTTP451 Configuration settings</PageTitle>
            <OutlineStar />
          </TitleBand>
          <Content>
            <Breadcrumb>
              <CrumbLink>Home</CrumbLink> » <CrumbLink>Administration</CrumbLink> »{" "}
              <CrumbLink>Configuration</CrumbLink> » <CrumbLink>System</CrumbLink>
            </Breadcrumb>
            <Field $gap={12}>
              <Label $after={3}>
                Blocked Post IDs:<Required>*</Required>
              </Label>
              <TextInput defaultValue="7" />
            </Field>
            <Field $gap={11}>
              <Label>
                Name of Authority:<Required>*</Required>
              </Label>
              <TextInput $focused />
              <Description $top={5}>You need to specify the name of the authority who requested the takedown.</Description>
            </Field>
            <Field $gap={12}>
              <Label>Censored page title:</Label>
              <TextInput $height={26} />
              <Description>If you wish to use a custom non-standard title to show up on this page, you can set it here.</Description>
            </Field>
            <Field $gap={11}>
              <Label>Reason for censorship:</Label>
              <TextArea />
              <Description>If you wish to use a custom message to show up on this page, you can set it here.</Description>
            </Field>
            <BlockButton>Block Item</BlockButton>
            <SaveButton>Save configuration</SaveButton>
          </Content>
        </Page>
        <ScrollTrack>
          <ScrollThumb />
        </ScrollTrack>
      </Viewport>
      <CornerTab />
    </Desktop>
  );
};

export default App;
